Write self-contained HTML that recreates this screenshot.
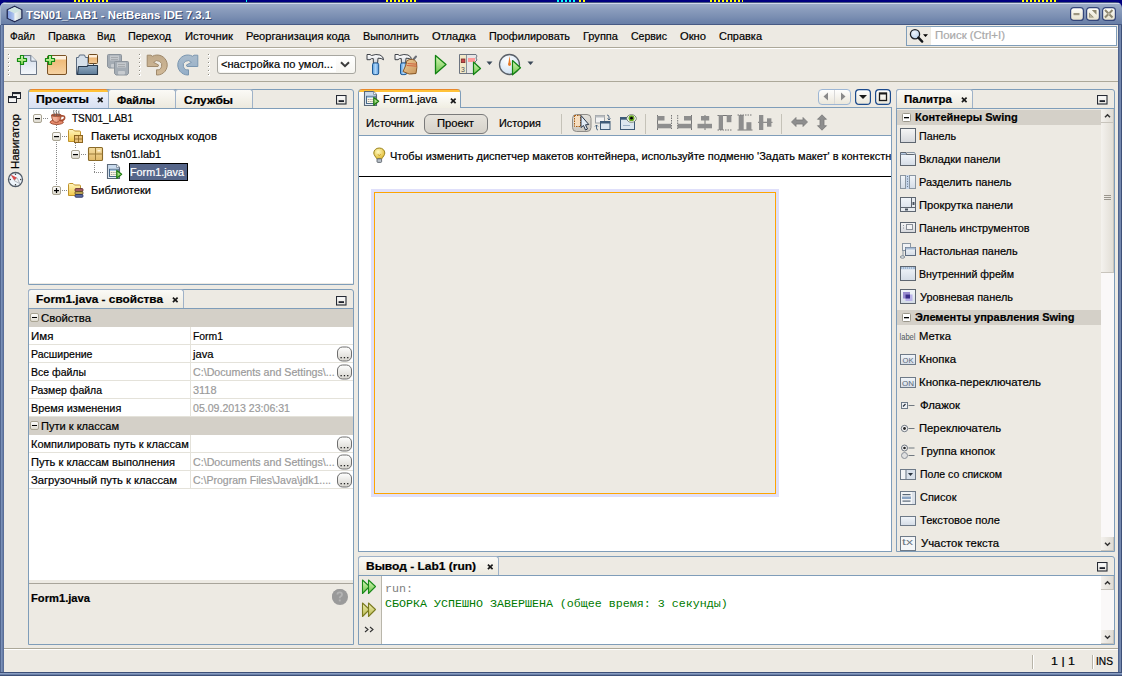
<!DOCTYPE html><html><head><meta charset="utf-8"><style>
html,body{margin:0;padding:0}
body{width:1122px;height:676px;position:relative;overflow:hidden;background:#000080;font-family:"Liberation Sans",sans-serif;font-size:11px;color:#000}
body>div,body>span,body>svg{position:absolute}
.t,.tt,.m{position:absolute;white-space:nowrap;line-height:13px;transform-origin:0 0}
.t{-webkit-text-stroke:0.2px}
</style></head><body>

<div style="left:0px;top:0px;width:1122px;height:3px;background:#000080"></div>
<div style="left:74px;top:0px;width:34px;height:2px;background:repeating-linear-gradient(90deg,#FFFF00 0,#FFFF00 2px,transparent 2px,transparent 4px)"></div>
<div style="left:386px;top:0px;width:32px;height:2px;background:repeating-linear-gradient(90deg,#FFFF00 0,#FFFF00 2px,transparent 2px,transparent 4px)"></div>
<div style="left:557px;top:0px;width:20px;height:2px;background:repeating-linear-gradient(90deg,#00FFFF 0,#00FFFF 2px,transparent 2px,transparent 4px)"></div>
<div style="left:579px;top:0px;width:8px;height:2px;background:repeating-linear-gradient(90deg,#FFFF00 0,#FFFF00 2px,transparent 2px,transparent 4px)"></div>
<div style="left:710px;top:0px;width:33px;height:2px;background:repeating-linear-gradient(90deg,#FFFF00 0,#FFFF00 2px,transparent 2px,transparent 4px)"></div>
<div style="left:1022px;top:0px;width:34px;height:2px;background:repeating-linear-gradient(90deg,#FFFF00 0,#FFFF00 2px,transparent 2px,transparent 4px)"></div>
<div style="left:246px;top:0px;width:1px;height:2px;background:repeating-linear-gradient(90deg,#00FFFF 0,#00FFFF 2px,transparent 2px,transparent 4px)"></div>
<div style="left:0;top:2px;width:1122px;height:674px;border-radius:6px 6px 0 0;box-shadow:inset 1px 0 0 #A8B8D0;background:linear-gradient(#4A5A80 0px,#4A5A80 1px,#D2DAEA 1px,#D2DAEA 2px,#9CACC8 2px,#8A9CBC 8px,#7A8EB2 15px,#6A80A8 21px,#6A80A8 22px,#475A84 22px,#475A84 23px,#5F739C 23px)"></div>
<div style="left:0px;top:25px;width:4px;height:651px;background:linear-gradient(90deg,#52668F 0,#52668F 1px,#7A90B8 1px,#7A90B8 2px,#6A80A8 2px,#6A80A8 3px,#5A6E98 3px)"></div>
<div style="left:1118px;top:25px;width:4px;height:651px;background:linear-gradient(90deg,#50648E 0,#50648E 1px,#6A80A8 1px,#6A80A8 2px,#7488AE 2px,#7488AE 3px,#3E5078 3px)"></div>
<div style="left:0px;top:672px;width:1122px;height:4px;background:linear-gradient(#3E5078 0,#3E5078 1px,#8A9EC2 1px,#8A9EC2 2px,#6A80A8 2px,#6A80A8 3px,#3E5078 3px)"></div>
<div style="left:4px;top:25px;width:1114px;height:647px;background:#EDEAE3"></div>
<span class="tt" style="left:26px;top:9px;color:#fff;font-weight:bold;font-size:11px;text-shadow:1px 1px 0 #3A4A70;transform:scaleX(1.0363);">TSN01_LAB1 - NetBeans IDE 7.3.1</span>
<span class="t" style="left:10px;top:30px;;transform:scaleX(0.9243);">Файл</span>
<span class="t" style="left:48px;top:30px;;transform:scaleX(0.9954);">Правка</span>
<span class="t" style="left:97px;top:30px;;transform:scaleX(0.9042);">Вид</span>
<span class="t" style="left:128px;top:30px;;transform:scaleX(0.9839);">Переход</span>
<span class="t" style="left:185px;top:30px;;transform:scaleX(1.0220);">Источник</span>
<span class="t" style="left:246px;top:30px;;transform:scaleX(1.0070);">Реорганизация кода</span>
<span class="t" style="left:363px;top:30px;;transform:scaleX(0.9914);">Выполнить</span>
<span class="t" style="left:432px;top:30px;;transform:scaleX(1.0119);">Отладка</span>
<span class="t" style="left:489px;top:30px;;transform:scaleX(0.9818);">Профилировать</span>
<span class="t" style="left:583px;top:30px;;transform:scaleX(1.0036);">Группа</span>
<span class="t" style="left:631px;top:30px;;transform:scaleX(0.9556);">Сервис</span>
<span class="t" style="left:680px;top:30px;;transform:scaleX(1.0171);">Окно</span>
<span class="t" style="left:719px;top:30px;;transform:scaleX(0.9964);">Справка</span>
<div style="left:4px;top:47px;width:1114px;height:1px;background:#ACA899"></div>
<div style="left:4px;top:48px;width:1114px;height:1px;background:#fff"></div>
<div style="left:4px;top:81px;width:1114px;height:1px;background:#ACA899"></div>
<div style="left:28px;top:89px;width:324px;height:194px;border:1px solid #7F9DB9;border-radius:3px 3px 0 0;background:#EDEAE3"></div>
<div style="left:29px;top:109px;width:324px;height:174px;background:#fff"></div>
<div style="left:29px;top:108px;width:324px;height:1px;background:#7F9DB9"></div>
<div style="left:28px;top:89px;width:81px;height:19px;border-radius:4px 4px 0 0;background:linear-gradient(#E8882A 0,#E8882A 1px,#FFC23A 1px,#FFC23A 3px,#EEF2FB 3px,#D8E0F2 100%);box-sizing:border-box;border-left:1px solid #7F9DB9;border-right:1px solid #7F9DB9"></div>
<div style="left:108px;top:89px;width:68px;height:19px;border-radius:3px 3px 0 0;background:linear-gradient(#FBFAF6,#ECE9DE);border:1px solid #9FB2C8;border-bottom:none;box-sizing:border-box"></div>
<div style="left:175px;top:89px;width:78px;height:19px;border-radius:3px 3px 0 0;background:linear-gradient(#FBFAF6,#ECE9DE);border:1px solid #9FB2C8;border-bottom:none;box-sizing:border-box"></div>
<span class="t" style="left:36px;top:93px;font-weight:bold;transform:scaleX(1.1099);">Проекты</span>
<svg style="left:97px;top:97px" width="7" height="6" viewBox="0 0 7 6"><path d='M0.9 0.7 L5.6 5.1 M5.6 0.7 L0.9 5.1' stroke='#1A1A1A' stroke-width='1.7'/></svg>
<span class="t" style="left:117px;top:94px;font-weight:bold;transform:scaleX(0.9830);">Файлы</span>
<span class="t" style="left:184px;top:94px;font-weight:bold;transform:scaleX(1.0881);">Службы</span>
<span class="t" style="left:72px;top:112px;;transform:scaleX(0.9069);">TSN01_LAB1</span>
<span class="t" style="left:91px;top:130px;;transform:scaleX(1.0348);">Пакеты исходных кодов</span>
<span class="t" style="left:111px;top:148px;;transform:scaleX(0.9849);">tsn01.lab1</span>
<div style="left:129px;top:163px;width:59px;height:18px;background:#56668A;border:1px solid #000;box-sizing:border-box"></div>
<span class="t" style="left:130px;top:166px;color:#fff;transform:scaleX(0.9813);">Form1.java</span>
<span class="t" style="left:91px;top:184px;;transform:scaleX(1.0066);">Библиотеки</span>
<div style="left:28px;top:289px;width:324px;height:354px;border:1px solid #7F9DB9;border-radius:3px 3px 0 0;background:#EDEAE3"></div>
<div style="left:29px;top:308px;width:324px;height:1px;background:#7F9DB9"></div>
<div style="left:29px;top:309px;width:324px;height:271px;background:#fff"></div>
<div style="left:28px;top:289px;width:156px;height:19px;border-radius:3px 3px 0 0;background:linear-gradient(#FBFAF6,#ECE9DE);border:1px solid #9FB2C8;border-bottom:none;box-sizing:border-box"></div>
<span class="t" style="left:36px;top:293px;font-weight:bold;transform:scaleX(1.0733);">Form1.java - свойства</span>
<svg style="left:172px;top:297px" width="7" height="6" viewBox="0 0 7 6"><path d='M0.9 0.7 L5.6 5.1 M5.6 0.7 L0.9 5.1' stroke='#1A1A1A' stroke-width='1.7'/></svg>
<div style="left:29px;top:309px;width:324px;height:18px;background:#D4D0C8"></div>
<svg style="left:30px;top:313px" width="9" height="9" viewBox="0 0 9 9"><defs><linearGradient id='sx' x1='0' y1='0' x2='0' y2='1'><stop offset='0' stop-color='#FFFFFF'/><stop offset='1' stop-color='#DCD8CC'/></linearGradient></defs><rect x='0.5' y='0.5' width='8' height='8' rx='1.5' fill='url(#sx)' stroke='#A9A493' stroke-width='1'/><rect x='2' y='4' width='5' height='1' fill='#000'/></svg>
<span class="t" style="left:41px;top:312px;;transform:scaleX(1.0349);">Свойства</span>
<div style="left:29px;top:344px;width:324px;height:1px;background:#E4E2DA"></div>
<div style="left:190px;top:327px;width:1px;height:18px;background:#E4E2DA"></div>
<span class="t" style="left:31px;top:330px;;transform:scaleX(1.0449);">Имя</span>
<span class="t" style="left:193px;top:330px;;transform:scaleX(0.9440);">Form1</span>
<div style="left:29px;top:362px;width:324px;height:1px;background:#E4E2DA"></div>
<div style="left:190px;top:345px;width:1px;height:18px;background:#E4E2DA"></div>
<span class="t" style="left:31px;top:348px;;transform:scaleX(0.9588);">Расширение</span>
<span class="t" style="left:193px;top:348px;;transform:scaleX(1.0155);">java</span>
<svg style="left:336px;top:346px" width="17" height="16" viewBox="0 0 17 16"><defs><linearGradient id='bt' x1='0' y1='0' x2='0' y2='1'><stop offset='0' stop-color='#FFFFFF'/><stop offset='1' stop-color='#D6D4CE'/></linearGradient></defs><rect x='1.5' y='1' width='14' height='14' rx='5' fill='url(#bt)' stroke='#6E6E6E' stroke-width='1'/><rect x='4.5' y='11' width='1.3' height='1.3' fill='#222'/><rect x='7.8' y='11' width='1.3' height='1.3' fill='#222'/><rect x='11.1' y='11' width='1.3' height='1.3' fill='#222'/></svg>
<div style="left:29px;top:380px;width:324px;height:1px;background:#E4E2DA"></div>
<div style="left:190px;top:363px;width:1px;height:18px;background:#E4E2DA"></div>
<span class="t" style="left:31px;top:366px;;transform:scaleX(0.9539);">Все файлы</span>
<span class="t" style="left:193px;top:366px;color:#9A9A9A;transform:scaleX(0.9696);">C:\Documents and Settings\...</span>
<svg style="left:336px;top:364px" width="17" height="16" viewBox="0 0 17 16"><defs><linearGradient id='bt' x1='0' y1='0' x2='0' y2='1'><stop offset='0' stop-color='#FFFFFF'/><stop offset='1' stop-color='#D6D4CE'/></linearGradient></defs><rect x='1.5' y='1' width='14' height='14' rx='5' fill='url(#bt)' stroke='#6E6E6E' stroke-width='1'/><rect x='4.5' y='11' width='1.3' height='1.3' fill='#222'/><rect x='7.8' y='11' width='1.3' height='1.3' fill='#222'/><rect x='11.1' y='11' width='1.3' height='1.3' fill='#222'/></svg>
<div style="left:29px;top:398px;width:324px;height:1px;background:#E4E2DA"></div>
<div style="left:190px;top:381px;width:1px;height:18px;background:#E4E2DA"></div>
<span class="t" style="left:31px;top:384px;;transform:scaleX(0.9502);">Размер файла</span>
<span class="t" style="left:193px;top:384px;color:#9A9A9A;transform:scaleX(0.9934);">3118</span>
<div style="left:29px;top:416px;width:324px;height:1px;background:#E4E2DA"></div>
<div style="left:190px;top:399px;width:1px;height:18px;background:#E4E2DA"></div>
<span class="t" style="left:31px;top:402px;;transform:scaleX(0.9881);">Время изменения</span>
<span class="t" style="left:193px;top:402px;color:#9A9A9A;transform:scaleX(0.9610);">05.09.2013 23:06:31</span>
<div style="left:29px;top:417px;width:324px;height:18px;background:#D4D0C8"></div>
<svg style="left:30px;top:421px" width="9" height="9" viewBox="0 0 9 9"><defs><linearGradient id='sx' x1='0' y1='0' x2='0' y2='1'><stop offset='0' stop-color='#FFFFFF'/><stop offset='1' stop-color='#DCD8CC'/></linearGradient></defs><rect x='0.5' y='0.5' width='8' height='8' rx='1.5' fill='url(#sx)' stroke='#A9A493' stroke-width='1'/><rect x='2' y='4' width='5' height='1' fill='#000'/></svg>
<span class="t" style="left:41px;top:420px;;transform:scaleX(1.0042);">Пути к классам</span>
<div style="left:29px;top:452px;width:324px;height:1px;background:#E4E2DA"></div>
<div style="left:190px;top:435px;width:1px;height:18px;background:#E4E2DA"></div>
<div style="left:31px;top:435px;width:159px;height:18px;overflow:hidden"><span class="t" style="left:0;top:3px">Компилировать путь к классам</span></div>
<svg style="left:336px;top:436px" width="17" height="16" viewBox="0 0 17 16"><defs><linearGradient id='bt' x1='0' y1='0' x2='0' y2='1'><stop offset='0' stop-color='#FFFFFF'/><stop offset='1' stop-color='#D6D4CE'/></linearGradient></defs><rect x='1.5' y='1' width='14' height='14' rx='5' fill='url(#bt)' stroke='#6E6E6E' stroke-width='1'/><rect x='4.5' y='11' width='1.3' height='1.3' fill='#222'/><rect x='7.8' y='11' width='1.3' height='1.3' fill='#222'/><rect x='11.1' y='11' width='1.3' height='1.3' fill='#222'/></svg>
<div style="left:29px;top:470px;width:324px;height:1px;background:#E4E2DA"></div>
<div style="left:190px;top:453px;width:1px;height:18px;background:#E4E2DA"></div>
<span class="t" style="left:31px;top:456px;;transform:scaleX(1.0092);">Путь к классам выполнения</span>
<span class="t" style="left:193px;top:456px;color:#9A9A9A;transform:scaleX(0.9696);">C:\Documents and Settings\...</span>
<svg style="left:336px;top:454px" width="17" height="16" viewBox="0 0 17 16"><defs><linearGradient id='bt' x1='0' y1='0' x2='0' y2='1'><stop offset='0' stop-color='#FFFFFF'/><stop offset='1' stop-color='#D6D4CE'/></linearGradient></defs><rect x='1.5' y='1' width='14' height='14' rx='5' fill='url(#bt)' stroke='#6E6E6E' stroke-width='1'/><rect x='4.5' y='11' width='1.3' height='1.3' fill='#222'/><rect x='7.8' y='11' width='1.3' height='1.3' fill='#222'/><rect x='11.1' y='11' width='1.3' height='1.3' fill='#222'/></svg>
<div style="left:29px;top:488px;width:324px;height:1px;background:#E4E2DA"></div>
<div style="left:190px;top:471px;width:1px;height:18px;background:#E4E2DA"></div>
<span class="t" style="left:31px;top:474px;;transform:scaleX(1.0190);">Загрузочный путь к классам</span>
<span class="t" style="left:193px;top:474px;color:#9A9A9A;transform:scaleX(0.9565);">C:\Program Files\Java\jdk1....</span>
<svg style="left:336px;top:472px" width="17" height="16" viewBox="0 0 17 16"><defs><linearGradient id='bt' x1='0' y1='0' x2='0' y2='1'><stop offset='0' stop-color='#FFFFFF'/><stop offset='1' stop-color='#D6D4CE'/></linearGradient></defs><rect x='1.5' y='1' width='14' height='14' rx='5' fill='url(#bt)' stroke='#6E6E6E' stroke-width='1'/><rect x='4.5' y='11' width='1.3' height='1.3' fill='#222'/><rect x='7.8' y='11' width='1.3' height='1.3' fill='#222'/><rect x='11.1' y='11' width='1.3' height='1.3' fill='#222'/></svg>
<div style="left:29px;top:583px;width:324px;height:1px;background:#A8A49A"></div>
<span class="t" style="left:31px;top:592px;font-weight:bold;transform:scaleX(1.0156);">Form1.java</span>
<div style="left:332px;top:589px;width:16px;height:16px;border-radius:8px;background:#9C9C9C"></div>
<div style="left:358px;top:107px;width:532px;height:443px;border:1px solid #7F9DB9;background:#fff"></div>
<div style="left:359px;top:108px;width:532px;height:28px;background:#EDEAE3"></div>
<div style="left:359px;top:135px;width:532px;height:1px;background:#7F9DB9"></div>
<div style="left:358px;top:89px;width:103px;height:19px;border-radius:4px 4px 0 0;background:linear-gradient(#E8882A 0,#E8882A 1px,#FFC23A 1px,#FFC23A 3px,#FFFFFF 3px,#F0EEE2 100%);border-left:1px solid #7F9DB9;border-right:1px solid #7F9DB9;box-sizing:border-box"></div>
<span class="t" style="left:383px;top:93px;;transform:scaleX(0.9813);">Form1.java</span>
<svg style="left:450px;top:98px" width="7" height="6" viewBox="0 0 7 6"><path d='M0.9 0.7 L5.6 5.1 M5.6 0.7 L0.9 5.1' stroke='#1A1A1A' stroke-width='1.7'/></svg>
<span class="t" style="left:366px;top:117px;;transform:scaleX(1.0220);">Источник</span>
<div style="left:424px;top:114px;width:64px;height:20px;border:1px solid #7A7A7A;border-radius:6px;background:linear-gradient(#E6E3DC,#D6D2CA);box-sizing:border-box"></div>
<span class="t" style="left:437px;top:117px;;transform:scaleX(1.0211);">Проект</span>
<span class="t" style="left:499px;top:117px;;transform:scaleX(0.9843);">История</span>
<div style="left:561px;top:114px;width:1px;height:20px;background:#C5C2B8"></div>
<div style="left:645px;top:114px;width:1px;height:20px;background:#C5C2B8"></div>
<div style="left:781px;top:114px;width:1px;height:20px;background:#C5C2B8"></div>
<span class="t" style="left:390px;top:150px;width:501px;overflow:hidden;">Чтобы изменить диспетчер макетов контейнера, используйте подменю 'Задать макет' в контекстном меню</span>
<div style="left:359px;top:176px;width:532px;height:1px;background:#000"></div>
<div style="left:371px;top:189px;width:408px;height:308px;background:#DFDFFA"></div>
<div style="left:374px;top:192px;width:402px;height:302px;border:1px solid #FFA500;box-shadow:inset 0 0 0 1px #E6EAF0;background:#EDEAE3;box-sizing:border-box"></div>
<div style="left:358px;top:556px;width:755px;height:87px;border:1px solid #7F9DB9;border-radius:3px 3px 0 0;background:#EDEAE3"></div>
<div style="left:359px;top:575px;width:755px;height:1px;background:#7F9DB9"></div>
<div style="left:382px;top:576px;width:732px;height:68px;background:#fff"></div>
<div style="left:381px;top:576px;width:1px;height:68px;background:#B9B6AA"></div>
<div style="left:358px;top:556px;width:141px;height:19px;border-radius:3px 3px 0 0;background:linear-gradient(#FBFAF6,#ECE9DE);border:1px solid #9FB2C8;border-bottom:none;box-sizing:border-box"></div>
<span class="t" style="left:366px;top:560px;font-weight:bold;transform:scaleX(1.0884);">Вывод - Lab1 (run)</span>
<svg style="left:487px;top:564px" width="7" height="6" viewBox="0 0 7 6"><path d='M0.9 0.7 L5.6 5.1 M5.6 0.7 L0.9 5.1' stroke='#1A1A1A' stroke-width='1.7'/></svg>
<span class="m" style="left:385px;top:583px;font-family:'Liberation Mono',monospace;font-size:11.67px;color:#808080;">run:</span>
<span class="m" style="left:385px;top:598px;font-family:'Liberation Mono',monospace;font-size:11.67px;color:#007A00;">СБОРКА УСПЕШНО ЗАВЕРШЕНА (общее время: 3 секунды)</span>
<div style="left:896px;top:89px;width:217px;height:461px;border:1px solid #7F9DB9;border-radius:3px 3px 0 0;background:#EDEAE3"></div>
<div style="left:897px;top:108px;width:217px;height:1px;background:#7F9DB9"></div>
<div style="left:896px;top:89px;width:77px;height:19px;border-radius:3px 3px 0 0;background:linear-gradient(#FBFAF6,#ECE9DE);border:1px solid #9FB2C8;border-bottom:none;box-sizing:border-box"></div>
<span class="t" style="left:904px;top:93px;font-weight:bold;transform:scaleX(1.0435);">Палитра</span>
<svg style="left:961px;top:97px" width="7" height="6" viewBox="0 0 7 6"><path d='M0.9 0.7 L5.6 5.1 M5.6 0.7 L0.9 5.1' stroke='#1A1A1A' stroke-width='1.7'/></svg>
<div style="left:897px;top:110px;width:204px;height:15px;background:#D4D0C8"></div>
<span class="t" style="left:915px;top:111px;font-weight:bold;">Контейнеры Swing</span>
<span class="t" style="left:919px;top:130px;;transform:scaleX(0.9733);">Панель</span>
<span class="t" style="left:919px;top:153px;;transform:scaleX(0.9973);">Вкладки панели</span>
<span class="t" style="left:919px;top:176px;;transform:scaleX(1.0012);">Разделить панель</span>
<span class="t" style="left:919px;top:199px;;transform:scaleX(1.0197);">Прокрутка панели</span>
<span class="t" style="left:919px;top:222px;;transform:scaleX(0.9890);">Панель инструментов</span>
<span class="t" style="left:919px;top:245px;;transform:scaleX(0.9883);">Настольная панель</span>
<span class="t" style="left:919px;top:268px;;transform:scaleX(0.9626);">Внутренний фрейм</span>
<span class="t" style="left:920px;top:291px;;transform:scaleX(0.9928);">Уровневая панель</span>
<div style="left:897px;top:310px;width:204px;height:15px;background:#D4D0C8"></div>
<span class="t" style="left:915px;top:311px;font-weight:bold;">Элементы управления Swing</span>
<span class="t" style="left:919px;top:330px;;transform:scaleX(1.0240);">Метка</span>
<span class="t" style="left:919px;top:353px;;transform:scaleX(1.0354);">Кнопка</span>
<span class="t" style="left:919px;top:376px;;transform:scaleX(1.0383);">Кнопка-переключатель</span>
<span class="t" style="left:919.5px;top:399px;;transform:scaleX(1.0302);">Флажок</span>
<span class="t" style="left:919px;top:422px;;transform:scaleX(1.0244);">Переключатель</span>
<span class="t" style="left:921px;top:445px;;transform:scaleX(1.0305);">Группа кнопок</span>
<span class="t" style="left:919.5px;top:468px;;transform:scaleX(0.9547);">Поле со списком</span>
<span class="t" style="left:919.5px;top:491px;;transform:scaleX(0.9970);">Список</span>
<span class="t" style="left:919.5px;top:514px;;transform:scaleX(1.0117);">Текстовое поле</span>
<span class="t" style="left:921px;top:537px;;transform:scaleX(1.0297);">Участок текста</span>
<div style="left:1101px;top:109px;width:13px;height:442px;background:#FAF8F8"></div>
<div style="left:1101px;top:109px;width:13px;height:1px;background:#fff"></div>
<div style="left:906px;top:26px;width:211px;height:20px;border:1px solid #7F9DB9;background:#fff;box-sizing:border-box"></div>
<div style="left:907px;top:27px;width:24px;height:18px;background:#EDEAE3"></div>
<span class="t" style="left:935px;top:29px;color:#A9A9A9;transform:scaleX(1.0378);">Поиск (Ctrl+I)</span>
<div style="left:4px;top:648px;width:1114px;height:1px;background:#ACA899"></div>
<div style="left:4px;top:649px;width:1114px;height:1px;background:#fff"></div>
<span class="t" style="left:1051px;top:655px;;transform:scaleX(1.1311);">1 | 1</span>
<span class="t" style="left:1096px;top:655px;;transform:scaleX(0.9267);">INS</span>
<svg style="left:6px;top:5px" width="17" height="18" viewBox="0 0 17 18"><defs><linearGradient id='cl' x1='0' x2='1'><stop offset='0' stop-color='#7F9BE0'/><stop offset='1' stop-color='#B8CCF0'/></linearGradient><linearGradient id='cr' x1='0' x2='1'><stop offset='0' stop-color='#F4F8F8'/><stop offset='1' stop-color='#C8D4D4'/></linearGradient></defs>
<path d='M8.6 1.3 L15.8 4.8 L15.8 13.2 L8.6 16.7 L1.3 13.2 L1.3 4.8 Z' fill='#D6E4E4' stroke='#1E2650' stroke-width='1.4' stroke-linejoin='round'/>
<path d='M1.9 5.2 L8.6 8.2 L8.6 16 L1.9 12.9 Z' fill='url(#cl)'/><path d='M8.6 8.2 L15.2 5.2 L15.2 12.9 L8.6 16 Z' fill='url(#cr)'/><path d='M2 4.9 L8.6 2 L15.2 4.9 L8.6 8 Z' fill='#CFE4E2'/></svg>
<svg style="left:1070px;top:7px" width="14" height="14" viewBox="0 0 14 14"><defs><linearGradient id='wb1070' x1='0' y1='0' x2='0' y2='1'><stop offset='0' stop-color='#FFFFFB'/><stop offset='1' stop-color='#E6E1CC'/></linearGradient></defs>
<rect x='0.6' y='0.6' width='12.8' height='12.8' rx='3' fill='url(#wb1070)' stroke='#34467A' stroke-width='1.2'/><rect x='3.5' y='6' width='6' height='2.2' fill='#9D9781'/></svg>
<svg style="left:1086px;top:7px" width="14" height="14" viewBox="0 0 14 14"><defs><linearGradient id='wb1086' x1='0' y1='0' x2='0' y2='1'><stop offset='0' stop-color='#FFFFFB'/><stop offset='1' stop-color='#E6E1CC'/></linearGradient></defs>
<rect x='0.6' y='0.6' width='12.8' height='12.8' rx='3' fill='url(#wb1086)' stroke='#34467A' stroke-width='1.2'/><path d='M3 10.5 L3 5.5 L8 10.5 Z M10.5 3 L5.8 3 L10.5 7.7 Z' fill='#8E8870'/><path d='M3.5 10 L3.5 7 L6.5 10 Z' fill='#B8B2A0'/></svg>
<svg style="left:1102px;top:7px" width="14" height="14" viewBox="0 0 14 14"><defs><linearGradient id='wb1102' x1='0' y1='0' x2='0' y2='1'><stop offset='0' stop-color='#FFFFFB'/><stop offset='1' stop-color='#E6E1CC'/></linearGradient></defs>
<rect x='0.6' y='0.6' width='12.8' height='12.8' rx='3' fill='url(#wb1102)' stroke='#34467A' stroke-width='1.2'/><path d='M3 3 L10.5 10.5 M10.5 3 L3 10.5' stroke='#8E8870' stroke-width='2'/><circle cx='6.8' cy='6.8' r='1.2' fill='#B8B2A0'/></svg>
<svg style="left:8px;top:54px" width="2" height="24" viewBox="0 0 2 24"><rect x='0' y='0' width='2' height='2' fill='#fff'/><rect x='0' y='0' width='1' height='1' fill='#8E8B80'/><rect x='0' y='4' width='2' height='2' fill='#fff'/><rect x='0' y='4' width='1' height='1' fill='#8E8B80'/><rect x='0' y='8' width='2' height='2' fill='#fff'/><rect x='0' y='8' width='1' height='1' fill='#8E8B80'/><rect x='0' y='12' width='2' height='2' fill='#fff'/><rect x='0' y='12' width='1' height='1' fill='#8E8B80'/><rect x='0' y='16' width='2' height='2' fill='#fff'/><rect x='0' y='16' width='1' height='1' fill='#8E8B80'/><rect x='0' y='20' width='2' height='2' fill='#fff'/><rect x='0' y='20' width='1' height='1' fill='#8E8B80'/></svg>
<svg style="left:139px;top:54px" width="2" height="24" viewBox="0 0 2 24"><rect x='0' y='0' width='2' height='2' fill='#fff'/><rect x='0' y='0' width='1' height='1' fill='#8E8B80'/><rect x='0' y='4' width='2' height='2' fill='#fff'/><rect x='0' y='4' width='1' height='1' fill='#8E8B80'/><rect x='0' y='8' width='2' height='2' fill='#fff'/><rect x='0' y='8' width='1' height='1' fill='#8E8B80'/><rect x='0' y='12' width='2' height='2' fill='#fff'/><rect x='0' y='12' width='1' height='1' fill='#8E8B80'/><rect x='0' y='16' width='2' height='2' fill='#fff'/><rect x='0' y='16' width='1' height='1' fill='#8E8B80'/><rect x='0' y='20' width='2' height='2' fill='#fff'/><rect x='0' y='20' width='1' height='1' fill='#8E8B80'/></svg>
<svg style="left:208px;top:54px" width="2" height="24" viewBox="0 0 2 24"><rect x='0' y='0' width='2' height='2' fill='#fff'/><rect x='0' y='0' width='1' height='1' fill='#8E8B80'/><rect x='0' y='4' width='2' height='2' fill='#fff'/><rect x='0' y='4' width='1' height='1' fill='#8E8B80'/><rect x='0' y='8' width='2' height='2' fill='#fff'/><rect x='0' y='8' width='1' height='1' fill='#8E8B80'/><rect x='0' y='12' width='2' height='2' fill='#fff'/><rect x='0' y='12' width='1' height='1' fill='#8E8B80'/><rect x='0' y='16' width='2' height='2' fill='#fff'/><rect x='0' y='16' width='1' height='1' fill='#8E8B80'/><rect x='0' y='20' width='2' height='2' fill='#fff'/><rect x='0' y='20' width='1' height='1' fill='#8E8B80'/></svg>
<svg style="left:16px;top:54px" width="22" height="22" viewBox="0 0 22 22"><defs><linearGradient id='gp' x1='0' y1='0' x2='0' y2='1'><stop offset='0' stop-color='#E6FFC8'/><stop offset='1' stop-color='#7CD24A'/></linearGradient><linearGradient id='pg' x1='0' y1='0' x2='0' y2='1'><stop offset='0' stop-color='#D2DCEA'/><stop offset='1' stop-color='#F4F7FB'/></linearGradient></defs>
<path d='M4.5 1.5 H14.8 L20.5 7.2 V20.5 H4.5 Z' fill='url(#pg)' stroke='#6A7686' stroke-width='1'/><path d='M14.8 1.5 V7.2 H20.5' fill='#E8EEF6' stroke='#6A7686' stroke-width='1'/><path d='M4.5 1.5 h3 v3 h3 v3 h-3 v3 h-3 v-3 h-3 v-3 h3 Z' fill='url(#gp)' stroke='#138A13' stroke-width='1.2' stroke-linejoin='round'/></svg>
<svg style="left:44px;top:54px" width="24" height="22" viewBox="0 0 24 22"><defs><linearGradient id='ob' x1='0' y1='0' x2='0' y2='1'><stop offset='0' stop-color='#ECB46C'/><stop offset='1' stop-color='#F6D2A2'/></linearGradient></defs>
<rect x='3.5' y='1.5' width='19' height='19' rx='1.5' fill='url(#ob)' stroke='#7A5226' stroke-width='1'/><rect x='4' y='2' width='18' height='3.5' fill='#FCF0E0'/><path d='M4.5 1.5 h3 v3 h3 v3 h-3 v3 h-3 v-3 h-3 v-3 h3 Z' fill='url(#gp)' stroke='#138A13' stroke-width='1.2' stroke-linejoin='round'/></svg>
<svg style="left:75px;top:53px" width="24" height="23" viewBox="0 0 24 23"><defs><linearGradient id='fd' x1='0' y1='0' x2='0' y2='1'><stop offset='0' stop-color='#90AAC2'/><stop offset='1' stop-color='#5E7C98'/></linearGradient><linearGradient id='ob2' x1='0' y1='0' x2='0' y2='1'><stop offset='0' stop-color='#E8A860'/><stop offset='1' stop-color='#F4CC98'/></linearGradient></defs>
<path d='M1.5 21.5 V4.5 H3.5 L4.5 2 H9.5 L10.5 4.5 H13 V21.5 Z' fill='#D6E0EA' stroke='#5C6C80' stroke-width='1'/>
<rect x='13.5' y='1.5' width='9' height='9' rx='1' fill='url(#ob2)' stroke='#6E4A1E' stroke-width='1'/><rect x='14' y='2' width='8' height='2.5' fill='#FCEEDC'/><rect x='18' y='10.5' width='1' height='3' fill='#4A5A6A'/>
<path d='M2.5 21.5 L3.5 13.5 H12 L13 12.5 H22.5 V21.5 Z' fill='url(#fd)' stroke='#26384C' stroke-width='1.1' stroke-linejoin='round'/></svg>
<svg style="left:106px;top:53px" width="24" height="23" viewBox="0 0 24 23"><path d='M1.5 2.5 q0 -1 1 -1 h12 q1 0 1 1 v11 l-1.5 1.5 h-11 l-1.5 -1.5 Z' fill='#A4ACB4' stroke='#8C949C' stroke-width='1'/><rect x='4' y='2.5' width='9' height='5' fill='#C4C8CC'/><rect x='5' y='4' width='7' height='0.8' fill='#A0A4A8'/><rect x='5' y='6' width='7' height='0.8' fill='#A0A4A8'/><rect x='5' y='11' width='7' height='3.5' rx='1' fill='#C8CCD0'/><path d='M8.5 9.5 q0 -1 1 -1 h12 q1 0 1 1 v11 l-1.5 1.5 h-11 l-1.5 -1.5 Z' fill='#A4ACB4' stroke='#8C949C' stroke-width='1'/><rect x='11' y='9.5' width='9' height='5' fill='#C4C8CC'/><rect x='12' y='11' width='7' height='0.8' fill='#A0A4A8'/><rect x='12' y='13' width='7' height='0.8' fill='#A0A4A8'/><rect x='12' y='18' width='7' height='3.5' rx='1' fill='#C8CCD0'/></svg>
<svg style="left:144px;top:52px" width="26" height="25" viewBox="0 0 26 25"><defs><linearGradient id='ug' x1='0' y1='0' x2='0' y2='1'><stop offset='0' stop-color='#C0AA8A'/><stop offset='1' stop-color='#D2BA98'/></linearGradient></defs><g fill='url(#ug)' stroke='#A08A6C'><path d='M8.3 4.3 A10 10 0 1 1 13 23 L12.5 23 L12.5 17.8 A4.6 4.6 0 1 0 9.6 10.4 L14.6 13 L14 14.5 L3.2 14.5 L3.2 3.2 L7 3.2 Z' stroke-linejoin='round' stroke-width='1'/></g></svg>
<svg style="left:175px;top:52px" width="26" height="25" viewBox="0 0 26 25"><defs><linearGradient id='rg' x1='0' y1='0' x2='0' y2='1'><stop offset='0' stop-color='#AABCCC'/><stop offset='1' stop-color='#94AEC8'/></linearGradient></defs><g transform='translate(26,0) scale(-1,1)' fill='url(#rg)' stroke='#7A96B0'><path d='M8.3 4.3 A10 10 0 1 1 13 23 L12.5 23 L12.5 17.8 A4.6 4.6 0 1 0 9.6 10.4 L14.6 13 L14 14.5 L3.2 14.5 L3.2 3.2 L7 3.2 Z' stroke-linejoin='round' stroke-width='1'/></g></svg>
<div style="left:217px;top:55px;width:139px;height:19px;border:1px solid #A7A6A0;border-radius:3px;background:linear-gradient(#FFFFFF,#F6F5F0);box-sizing:border-box"></div>
<div style="left:220px;top:57px;width:116px;height:15px;background:#fff"></div>
<svg style="left:340px;top:61px" width="10" height="7" viewBox="0 0 10 7"><path d='M1 1.2 L5 5.2 L9 1.2' fill='none' stroke='#3C3C3C' stroke-width='2'/></svg>
<svg style="left:364px;top:52px" width="24" height="25" viewBox="0 0 24 25"><defs><linearGradient id='hm' x1='0' y1='0' x2='0' y2='1'><stop offset='0' stop-color='#FFFFFF'/><stop offset='1' stop-color='#D0D4DA'/></linearGradient><linearGradient id='hd' x1='0' y1='0' x2='1' y2='0'><stop offset='0' stop-color='#5A9CDC'/><stop offset='0.5' stop-color='#B0D8FA'/><stop offset='1' stop-color='#5494D8'/></linearGradient></defs><path d='M3 2.5 L6 2.5 L7.5 3.5 Q12 1.8 16 3 Q19.5 4.5 19.6 7.8 Q17.5 6 14 6.2 L13.6 11.2 L9.4 11.2 L9.3 6.6 L7.5 6.6 L6 7.7 L3 7.7 Z' fill='url(#hm)' stroke='#3E4248' stroke-width='1' stroke-linejoin='round'/><rect x='8.5' y='11' width='6.2' height='11.6' rx='1.6' fill='url(#hd)' stroke='#1E5A96' stroke-width='1'/></svg>
<svg style="left:392px;top:52px" width="28" height="25" viewBox="0 0 28 25"><defs><linearGradient id='hm' x1='0' y1='0' x2='0' y2='1'><stop offset='0' stop-color='#FFFFFF'/><stop offset='1' stop-color='#D0D4DA'/></linearGradient><linearGradient id='hd' x1='0' y1='0' x2='1' y2='0'><stop offset='0' stop-color='#5A9CDC'/><stop offset='0.5' stop-color='#B0D8FA'/><stop offset='1' stop-color='#5494D8'/></linearGradient><linearGradient id='br' x1='0' y1='0' x2='1' y2='1'><stop offset='0' stop-color='#F0D09A'/><stop offset='1' stop-color='#C8945A'/></linearGradient></defs><path d='M3 2.5 L6 2.5 L7.5 3.5 Q12 1.8 16 3 Q19.5 4.5 19.6 7.8 Q17.5 6 14 6.2 L13.6 11.2 L9.4 11.2 L9.3 6.6 L7.5 6.6 L6 7.7 L3 7.7 Z' fill='url(#hm)' stroke='#3E4248' stroke-width='1' stroke-linejoin='round'/><rect x='8.5' y='11' width='6.2' height='11.6' rx='1.6' fill='url(#hd)' stroke='#1E5A96' stroke-width='1'/><path d='M21 8 L24 4.5' stroke='#6A6E76' stroke-width='2' stroke-linecap='round'/><path d='M15 8.5 Q21 5.5 24.5 10 Q25.5 15 24 21.5 Q17 23.5 11 19.5 Q14 14 15 8.5 Z' fill='url(#br)' stroke='#8A5A28' stroke-width='1' stroke-linejoin='round'/><path d='M15.5 11.5 L24.8 12.2 M14.8 13.5 L24.8 14.2' stroke='#D05A3A' stroke-width='0.9'/></svg>
<svg style="left:434px;top:54px" width="14" height="22" viewBox="0 0 14 22"><defs><linearGradient id='gt' x1='0' y1='0' x2='0' y2='1'><stop offset='0' stop-color='#D8F8B8'/><stop offset='1' stop-color='#6CC24A'/></linearGradient></defs><path d='M1.5 1.5 L12 10.5 L1.5 19.8 Z' fill='url(#gt)' stroke='#128212' stroke-width='1.3' stroke-linejoin='round'/></svg>
<svg style="left:458px;top:53px" width="25" height="23" viewBox="0 0 25 23"><defs><linearGradient id='gt2' x1='0' y1='0' x2='0' y2='1'><stop offset='0' stop-color='#D8F8B8'/><stop offset='1' stop-color='#6CC24A'/></linearGradient></defs><path d='M1.5 1.5 H18 L19 3 L18 5 L19 7 L17 9 V19 L15 20.5 H1.5 Z' fill='#E6E6E6' stroke='#6C7480' stroke-width='1'/><rect x='2' y='2' width='6' height='18' fill='#F2E8C8'/><rect x='8' y='2' width='1' height='18' fill='#8A9098'/><rect x='3.3' y='6' width='3.6' height='3.6' fill='#C84848' stroke='#7A2828' stroke-width='0.8'/><text x='3' y='18.5' font-size='7' font-family='Liberation Sans' fill='#4A5058'>3</text><rect x='10' y='5' width='7' height='4' fill='#FF9A9A'/><path d='M15.5 9 L22.5 15.5 L15.5 21.5 Z' fill='url(#gt2)' stroke='#128212' stroke-width='1.2' stroke-linejoin='round'/></svg>
<svg style="left:486px;top:61px" width="7" height="5" viewBox="0 0 7 5"><path d='M0.5 0.5 H6.5 L3.5 4 Z' fill='#3A4858'/></svg>
<svg style="left:498px;top:53px" width="24" height="23" viewBox="0 0 24 23"><defs><linearGradient id='gt3' x1='0' y1='0' x2='0' y2='1'><stop offset='0' stop-color='#D8F8B8'/><stop offset='1' stop-color='#6CC24A'/></linearGradient><radialGradient id='ck' cx='0.4' cy='0.3' r='0.8'><stop offset='0' stop-color='#FFFFFF'/><stop offset='1' stop-color='#C8DCF0'/></radialGradient></defs><circle cx='11.5' cy='11.5' r='10' fill='url(#ck)' stroke='#5A6068' stroke-width='1.3'/><path d='M11.5 3 L12.8 11.5 L10.2 11.5 Z' fill='#E87A28'/><circle cx='11.5' cy='11.5' r='1.4' fill='#E87A28'/><path d='M14.5 7.5 L22.5 14.8 L14.5 21.8 Z' fill='url(#gt3)' stroke='#128212' stroke-width='1.2' stroke-linejoin='round'/></svg>
<svg style="left:527px;top:61px" width="7" height="5" viewBox="0 0 7 5"><path d='M0.5 0.5 H6.5 L3.5 4 Z' fill='#3A4858'/></svg>
<span class="t" style="left:221px;top:58px;;transform:scaleX(1.0063);">&lt;настройка по умол...</span>
<svg style="left:8px;top:92px" width="14" height="12" viewBox="0 0 14 12"><rect x='4.5' y='0.5' width='8' height='6' fill='#F4F4F4' stroke='#22262E' stroke-width='1'/><rect x='4.5' y='0.5' width='8' height='1.6' fill='#22262E'/><rect x='0.5' y='4.5' width='8' height='6' fill='#F4F4F4' stroke='#22262E' stroke-width='1'/><rect x='0.5' y='4.5' width='8' height='1.6' fill='#22262E'/></svg>
<span class="t" style="left:9px;top:169px;transform:rotate(-90deg) scaleX(1.04)">Навигатор</span>
<svg style="left:7px;top:171px" width="17" height="17" viewBox="0 0 17 17"><circle cx='8.5' cy='8.5' r='7' fill='#EEF4FA' stroke='#505A66' stroke-width='1.3'/><circle cx='8.5' cy='3.3' r='0.7' fill='#333'/><circle cx='8.5' cy='13.7' r='0.7' fill='#333'/><circle cx='3.3' cy='8.5' r='0.7' fill='#333'/><circle cx='13.7' cy='8.5' r='0.7' fill='#333'/><path d='M3.6 3.4 L10 6.8 L7.2 9.6 Z' fill='#D84848'/><path d='M10 6.8 L12.8 12.6 L7.2 9.6 Z' fill='#F4F4F4' stroke='#8A9098' stroke-width='0.6'/></svg>
<svg style="left:33px;top:114px" width="9" height="9" viewBox="0 0 9 9"><defs><linearGradient id='ex' x1='0' y1='0' x2='0' y2='1'><stop offset='0' stop-color='#FFFFFF'/><stop offset='1' stop-color='#DCD8CC'/></linearGradient></defs><rect x='0.5' y='0.5' width='8' height='8' rx='1.5' fill='url(#ex)' stroke='#A9A493' stroke-width='1'/><rect x='2' y='4' width='5' height='1.2' fill='#000'/></svg>
<svg style="left:43px;top:118px" width="6" height="1" viewBox="0 0 6 1"><rect x='0' y='0' width='1' height='1' fill='#888'/><rect x='2' y='0' width='1' height='1' fill='#888'/><rect x='4' y='0' width='1' height='1' fill='#888'/></svg>
<svg style="left:56px;top:125px" width="1" height="6" viewBox="0 0 1 6"><rect x='0' y='0' width='1' height='1' fill='#888'/><rect x='0' y='2' width='1' height='1' fill='#888'/><rect x='0' y='4' width='1' height='1' fill='#888'/></svg>
<svg style="left:52px;top:132px" width="9" height="9" viewBox="0 0 9 9"><defs><linearGradient id='ex' x1='0' y1='0' x2='0' y2='1'><stop offset='0' stop-color='#FFFFFF'/><stop offset='1' stop-color='#DCD8CC'/></linearGradient></defs><rect x='0.5' y='0.5' width='8' height='8' rx='1.5' fill='url(#ex)' stroke='#A9A493' stroke-width='1'/><rect x='2' y='4' width='5' height='1.2' fill='#000'/></svg>
<svg style="left:62px;top:136px" width="6" height="1" viewBox="0 0 6 1"><rect x='0' y='0' width='1' height='1' fill='#888'/><rect x='2' y='0' width='1' height='1' fill='#888'/><rect x='4' y='0' width='1' height='1' fill='#888'/></svg>
<svg style="left:56px;top:142px" width="1" height="44" viewBox="0 0 1 44"><rect x='0' y='0' width='1' height='1' fill='#888'/><rect x='0' y='2' width='1' height='1' fill='#888'/><rect x='0' y='4' width='1' height='1' fill='#888'/><rect x='0' y='6' width='1' height='1' fill='#888'/><rect x='0' y='8' width='1' height='1' fill='#888'/><rect x='0' y='10' width='1' height='1' fill='#888'/><rect x='0' y='12' width='1' height='1' fill='#888'/><rect x='0' y='14' width='1' height='1' fill='#888'/><rect x='0' y='16' width='1' height='1' fill='#888'/><rect x='0' y='18' width='1' height='1' fill='#888'/><rect x='0' y='20' width='1' height='1' fill='#888'/><rect x='0' y='22' width='1' height='1' fill='#888'/><rect x='0' y='24' width='1' height='1' fill='#888'/><rect x='0' y='26' width='1' height='1' fill='#888'/><rect x='0' y='28' width='1' height='1' fill='#888'/><rect x='0' y='30' width='1' height='1' fill='#888'/><rect x='0' y='32' width='1' height='1' fill='#888'/><rect x='0' y='34' width='1' height='1' fill='#888'/><rect x='0' y='36' width='1' height='1' fill='#888'/><rect x='0' y='38' width='1' height='1' fill='#888'/><rect x='0' y='40' width='1' height='1' fill='#888'/><rect x='0' y='42' width='1' height='1' fill='#888'/></svg>
<svg style="left:75px;top:143px" width="1" height="6" viewBox="0 0 1 6"><rect x='0' y='0' width='1' height='1' fill='#888'/><rect x='0' y='2' width='1' height='1' fill='#888'/><rect x='0' y='4' width='1' height='1' fill='#888'/></svg>
<svg style="left:71px;top:150px" width="9" height="9" viewBox="0 0 9 9"><defs><linearGradient id='ex' x1='0' y1='0' x2='0' y2='1'><stop offset='0' stop-color='#FFFFFF'/><stop offset='1' stop-color='#DCD8CC'/></linearGradient></defs><rect x='0.5' y='0.5' width='8' height='8' rx='1.5' fill='url(#ex)' stroke='#A9A493' stroke-width='1'/><rect x='2' y='4' width='5' height='1.2' fill='#000'/></svg>
<svg style="left:81px;top:154px" width="6" height="1" viewBox="0 0 6 1"><rect x='0' y='0' width='1' height='1' fill='#888'/><rect x='2' y='0' width='1' height='1' fill='#888'/><rect x='4' y='0' width='1' height='1' fill='#888'/></svg>
<svg style="left:94px;top:163px" width="1" height="10" viewBox="0 0 1 10"><rect x='0' y='0' width='1' height='1' fill='#888'/><rect x='0' y='2' width='1' height='1' fill='#888'/><rect x='0' y='4' width='1' height='1' fill='#888'/><rect x='0' y='6' width='1' height='1' fill='#888'/><rect x='0' y='8' width='1' height='1' fill='#888'/></svg>
<svg style="left:94px;top:172px" width="10" height="1" viewBox="0 0 10 1"><rect x='0' y='0' width='1' height='1' fill='#888'/><rect x='2' y='0' width='1' height='1' fill='#888'/><rect x='4' y='0' width='1' height='1' fill='#888'/><rect x='6' y='0' width='1' height='1' fill='#888'/><rect x='8' y='0' width='1' height='1' fill='#888'/></svg>
<svg style="left:52px;top:186px" width="9" height="9" viewBox="0 0 9 9"><defs><linearGradient id='ex' x1='0' y1='0' x2='0' y2='1'><stop offset='0' stop-color='#FFFFFF'/><stop offset='1' stop-color='#DCD8CC'/></linearGradient></defs><rect x='0.5' y='0.5' width='8' height='8' rx='1.5' fill='url(#ex)' stroke='#A9A493' stroke-width='1'/><rect x='2' y='4' width='5' height='1.2' fill='#000'/><rect x='3.9' y='2' width='1.2' height='5' fill='#000'/></svg>
<svg style="left:62px;top:190px" width="6" height="1" viewBox="0 0 6 1"><rect x='0' y='0' width='1' height='1' fill='#888'/><rect x='2' y='0' width='1' height='1' fill='#888'/><rect x='4' y='0' width='1' height='1' fill='#888'/></svg>
<svg style="left:48px;top:108px" width="20" height="18" viewBox="0 0 20 18"><defs><linearGradient id='cup' x1='0' y1='0' x2='1' y2='0'><stop offset='0' stop-color='#F4B8A0'/><stop offset='0.5' stop-color='#F0A890'/><stop offset='1' stop-color='#C86A4C'/></linearGradient></defs><ellipse cx='8.7' cy='14.2' rx='6.6' ry='2.3' fill='#E88C6E' stroke='#9A4428' stroke-width='0.9'/><path d='M13 8 Q17.2 7.2 16.6 10.2 Q16 12.6 12.2 12.6' fill='none' stroke='#A84C30' stroke-width='1.6'/><path d='M3.6 7 Q3.8 14.2 8.4 14.4 Q12.8 14.2 13.2 7 Z' fill='url(#cup)' stroke='#9A4428' stroke-width='0.9'/><ellipse cx='8.4' cy='7.2' rx='4.8' ry='1.3' fill='#B0583C' stroke='#9A4428' stroke-width='0.6'/><path d='M6 2 Q5.2 3.5 6 5 Q6.6 6.2 6 8 M8.5 2 Q7.7 3.5 8.5 5 Q9.1 6.2 8.5 8 M11 2.5 Q10.4 4 11 5.5 Q11.4 6.5 10.8 8' fill='none' stroke='#5A5A5A' stroke-width='0.9'/></svg>
<svg style="left:67px;top:128px" width="17" height="16" viewBox="0 0 17 16"><defs><linearGradient id='fy' x1='0' y1='0' x2='0' y2='1'><stop offset='0' stop-color='#FFF6C0'/><stop offset='1' stop-color='#F2C84A'/></linearGradient></defs><path d='M1.5 13.5 V2.5 Q1.5 1.5 2.5 1.5 H6 L7.5 3 H12.5 Q13.5 3 13.5 4 V13.5 Z' fill='url(#fy)' stroke='#C0922A' stroke-width='1'/><rect x='7.5' y='7.5' width='8' height='7' fill='#E8C078' stroke='#8A6420' stroke-width='1'/><path d='M11.5 7.5 V14.5 M7.5 11 H15.5' stroke='#8A6420' stroke-width='0.8'/></svg>
<svg style="left:87px;top:146px" width="17" height="16" viewBox="0 0 17 16"><defs><linearGradient id='pk' x1='0' y1='0' x2='0' y2='1'><stop offset='0' stop-color='#F4DCA0'/><stop offset='1' stop-color='#E2BA6A'/></linearGradient></defs><rect x='1.5' y='1.5' width='14' height='13' rx='1' fill='url(#pk)' stroke='#8A6A28' stroke-width='1.1'/><path d='M8.5 1.5 V14.5 M1.5 8 H15.5' stroke='#9A7A38' stroke-width='1'/><rect x='10.5' y='4' width='3' height='1.5' fill='#FFF4D8'/></svg>
<svg style="left:106px;top:163px" width="17" height="17" viewBox="0 0 17 17"><defs><linearGradient id='fma' x1='0' y1='0' x2='0' y2='1'><stop offset='0' stop-color='#C6D8EC'/><stop offset='1' stop-color='#E6EEF6'/></linearGradient><linearGradient id='fga' x1='0' y1='0' x2='0' y2='1'><stop offset='0' stop-color='#D8F8B8'/><stop offset='1' stop-color='#6CC24A'/></linearGradient></defs><path d='M1.5 1.5 H10.5 L13.5 4.5 V15.5 H1.5 Z' fill='url(#fma)' stroke='#5A6878' stroke-width='1.1'/><path d='M10.5 1.5 V4.5 H13.5' fill='#F4F8FC' stroke='#7A8898' stroke-width='0.8'/><rect x='3.5' y='6.3' width='8.8' height='7.2' fill='#FBF6E6' stroke='#4A6A8A' stroke-width='1'/><rect x='4' y='6.8' width='7.8' height='1.2' fill='#A8C8E8'/><path d='M4.8 9.5 H10.5 M4.8 11.5 H10.5' stroke='#8A8A8A' stroke-width='0.8' stroke-dasharray='1.2 0.6'/><path d='M10.8 7.4 L15.6 11.3 L10.8 15.2 Z' fill='url(#fga)' stroke='#1E7A10' stroke-width='1.3' stroke-linejoin='round'/></svg>
<svg style="left:67px;top:182px" width="18" height="16" viewBox="0 0 18 16"><defs><linearGradient id='fy2' x1='0' y1='0' x2='0' y2='1'><stop offset='0' stop-color='#FFF6C0'/><stop offset='1' stop-color='#F2C84A'/></linearGradient></defs><path d='M1.5 13.5 V2.5 Q1.5 1.5 2.5 1.5 H6 L7.5 3 H12.5 Q13.5 3 13.5 4 V13.5 Z' fill='url(#fy2)' stroke='#C0922A' stroke-width='1'/><rect x='8' y='6.5' width='8' height='3' rx='1' fill='#A05A60' stroke='#5A2A30' stroke-width='0.8'/><rect x='8' y='9.5' width='8' height='3' rx='1' fill='#B8A050' stroke='#5A4A20' stroke-width='0.8'/><rect x='8' y='12.5' width='8' height='2.8' rx='1' fill='#5A6AA0' stroke='#2A3060' stroke-width='0.8'/></svg>
<svg style="left:336px;top:95px" width="11" height="10" viewBox="0 0 11 10"><defs><linearGradient id='mb' x1='0' y1='0' x2='0' y2='1'><stop offset='0' stop-color='#FFFFFF'/><stop offset='1' stop-color='#E4E2DC'/></linearGradient></defs><rect x='0.5' y='0.5' width='9.5' height='8.5' fill='url(#mb)' stroke='#262A34' stroke-width='1.1'/><rect x='2.6' y='5.2' width='5.4' height='1.8' fill='#1E222C'/></svg>
<svg style="left:336px;top:296px" width="11" height="10" viewBox="0 0 11 10"><defs><linearGradient id='mb' x1='0' y1='0' x2='0' y2='1'><stop offset='0' stop-color='#FFFFFF'/><stop offset='1' stop-color='#E4E2DC'/></linearGradient></defs><rect x='0.5' y='0.5' width='9.5' height='8.5' fill='url(#mb)' stroke='#262A34' stroke-width='1.1'/><rect x='2.6' y='5.2' width='5.4' height='1.8' fill='#1E222C'/></svg>
<svg style="left:1097px;top:95px" width="11" height="10" viewBox="0 0 11 10"><defs><linearGradient id='mb' x1='0' y1='0' x2='0' y2='1'><stop offset='0' stop-color='#FFFFFF'/><stop offset='1' stop-color='#E4E2DC'/></linearGradient></defs><rect x='0.5' y='0.5' width='9.5' height='8.5' fill='url(#mb)' stroke='#262A34' stroke-width='1.1'/><rect x='2.6' y='5.2' width='5.4' height='1.8' fill='#1E222C'/></svg>
<svg style="left:1097px;top:562px" width="11" height="10" viewBox="0 0 11 10"><defs><linearGradient id='mb' x1='0' y1='0' x2='0' y2='1'><stop offset='0' stop-color='#FFFFFF'/><stop offset='1' stop-color='#E4E2DC'/></linearGradient></defs><rect x='0.5' y='0.5' width='9.5' height='8.5' fill='url(#mb)' stroke='#262A34' stroke-width='1.1'/><rect x='2.6' y='5.2' width='5.4' height='1.8' fill='#1E222C'/></svg>
<svg style="left:818px;top:89px" width="33" height="16" viewBox="0 0 33 16"><defs><linearGradient id='eb' x1='0' y1='0' x2='0' y2='1'><stop offset='0' stop-color='#FFFFFF'/><stop offset='1' stop-color='#EAE6DA'/></linearGradient></defs><rect x='0.5' y='0.5' width='32' height='15' rx='3.5' fill='url(#eb)' stroke='#9DB6D4' stroke-width='1'/><rect x='16' y='1' width='1' height='14' fill='#D8D8D8'/><path d='M10 3.5 V11.5 L5.5 7.5 Z' fill='#8A8A8A'/><path d='M23 3.5 V11.5 L27.5 7.5 Z' fill='#8A8A8A'/></svg>
<svg style="left:855px;top:89px" width="16" height="16" viewBox="0 0 16 16"><defs><linearGradient id='eb2' x1='0' y1='0' x2='0' y2='1'><stop offset='0' stop-color='#FFFFFF'/><stop offset='1' stop-color='#EAE6DA'/></linearGradient></defs><rect x='0.6' y='0.6' width='14.8' height='14.8' rx='3.5' fill='url(#eb2)' stroke='#1B4A8C' stroke-width='1.2'/><path d='M4 6 H12 L8 10 Z' fill='#1A1A1A'/></svg>
<svg style="left:875px;top:89px" width="16" height="16" viewBox="0 0 16 16"><defs><linearGradient id='eb3' x1='0' y1='0' x2='0' y2='1'><stop offset='0' stop-color='#FFFFFF'/><stop offset='1' stop-color='#EAE6DA'/></linearGradient></defs><rect x='0.6' y='0.6' width='14.8' height='14.8' rx='3.5' fill='url(#eb3)' stroke='#1B4A8C' stroke-width='1.2'/><rect x='4.5' y='4' width='7' height='7.5' fill='none' stroke='#1A1A1A' stroke-width='1.3'/><rect x='4.5' y='4' width='7' height='1.5' fill='#1A1A1A'/></svg>
<svg style="left:363px;top:90px" width="17" height="17" viewBox="0 0 17 17"><defs><linearGradient id='fmb' x1='0' y1='0' x2='0' y2='1'><stop offset='0' stop-color='#C6D8EC'/><stop offset='1' stop-color='#E6EEF6'/></linearGradient><linearGradient id='fgb' x1='0' y1='0' x2='0' y2='1'><stop offset='0' stop-color='#D8F8B8'/><stop offset='1' stop-color='#6CC24A'/></linearGradient></defs><path d='M1.5 1.5 H10.5 L13.5 4.5 V15.5 H1.5 Z' fill='url(#fmb)' stroke='#5A6878' stroke-width='1.1'/><path d='M10.5 1.5 V4.5 H13.5' fill='#F4F8FC' stroke='#7A8898' stroke-width='0.8'/><rect x='3.5' y='6.3' width='8.8' height='7.2' fill='#FBF6E6' stroke='#4A6A8A' stroke-width='1'/><rect x='4' y='6.8' width='7.8' height='1.2' fill='#A8C8E8'/><path d='M4.8 9.5 H10.5 M4.8 11.5 H10.5' stroke='#8A8A8A' stroke-width='0.8' stroke-dasharray='1.2 0.6'/><path d='M10.8 7.4 L15.6 11.3 L10.8 15.2 Z' fill='url(#fgb)' stroke='#1E7A10' stroke-width='1.3' stroke-linejoin='round'/></svg>
<svg style="left:372px;top:147px" width="14" height="17" viewBox="0 0 14 17"><defs><radialGradient id='bl' cx='0.4' cy='0.35' r='0.7'><stop offset='0' stop-color='#FFFAC0'/><stop offset='1' stop-color='#E0B82A'/></radialGradient></defs><path d='M7.3 1 C4 1 1.8 3.3 1.8 6 C1.8 8.2 3.6 9.6 4.8 11.8 H9.8 C11 9.6 12.8 8.2 12.8 6 C12.8 3.3 10.6 1 7.3 1 Z' fill='url(#bl)' stroke='#9A8420' stroke-width='1'/><path d='M5.8 7 L7.3 9 L8.8 7' fill='none' stroke='#C89A20' stroke-width='0.7'/><rect x='5' y='11.8' width='4.6' height='3.6' rx='0.8' fill='#B8C0C8' stroke='#4E5660' stroke-width='0.8'/></svg>
<svg style="left:572px;top:114px" width="20" height="18" viewBox="0 0 20 18"><defs><linearGradient id='sm' x1='0' y1='0' x2='0' y2='1'><stop offset='0' stop-color='#E4E2DC'/><stop offset='1' stop-color='#CCC8C0'/></linearGradient></defs><rect x='0.5' y='0.5' width='18.5' height='17' rx='4' fill='url(#sm)' stroke='#8E8C88' stroke-width='1'/><rect x='2.5' y='1.5' width='6' height='11' fill='#F6DEC0' stroke='#A85A10' stroke-width='1' stroke-dasharray='1.5 1'/><path d='M9 1.5 L9 13.5 L11.5 11.5 L13.5 16 L15.5 15 L13.5 10.8 L16.8 10.5 Z' fill='#E2ECF6' stroke='#2A3648' stroke-width='1' stroke-linejoin='round'/></svg>
<svg style="left:594px;top:114px" width="18" height="17" viewBox="0 0 18 17"><rect x='1.5' y='1.5' width='9' height='7.5' fill='#F2F2F2' stroke='#9CA0A4' stroke-width='1'/><rect x='1.5' y='1.5' width='9' height='2' fill='#B8BCC0'/><rect x='6.5' y='7.5' width='9.5' height='8' fill='#DCE6F0' stroke='#3E5A78' stroke-width='1'/><rect x='6.5' y='7.5' width='9.5' height='2' fill='#3E5A78'/><path d='M13 1 Q15 1 15 3 V6 M13.5 4.5 L15 6 L16.5 4.5' fill='none' stroke='#3E5A78' stroke-width='0.9'/><path d='M4 16 Q2.5 16 2.5 14 V11 M1 12.5 L2.5 11 L4 12.5' fill='none' stroke='#3E5A78' stroke-width='0.9'/></svg>
<svg style="left:620px;top:114px" width="18" height="17" viewBox="0 0 18 17"><rect x='0.5' y='3.5' width='14' height='12' fill='#DCE6F0' stroke='#3E5A78' stroke-width='1'/><rect x='0.5' y='3.5' width='14' height='2.2' fill='#3E5A78'/><rect x='3' y='11' width='7' height='1' fill='#9AB0C8'/><ellipse cx='11.5' cy='4.5' rx='4.8' ry='3.8' fill='#fff' stroke='#5A6A58' stroke-width='0.8'/><circle cx='11.5' cy='4.2' r='3' fill='#6AAA20'/><circle cx='11.5' cy='4.2' r='1.4' fill='#000'/></svg>
<svg style="left:652px;top:110px" width="124" height="24" viewBox="0 0 124 24"><rect x='5' y='5' width='1' height='15' fill='#777'/><rect x='5' y='6' width='7.5' height='4.5' fill='#8E8E8E'/><rect x='5' y='13.8' width='14' height='4.5' fill='#8E8E8E'/><path d='M19.5 5 V20' stroke='#777' stroke-width='1' stroke-dasharray='1.5 1'/><rect x='39' y='5' width='1' height='15' fill='#777'/><rect x='32' y='6' width='7.5' height='4.5' fill='#8E8E8E'/><rect x='25.7' y='13.8' width='14' height='4.5' fill='#8E8E8E'/><path d='M25.7 5 V20' stroke='#777' stroke-width='1' stroke-dasharray='1.5 1'/><rect x='52.5' y='5' width='1' height='15' fill='#777'/><rect x='49' y='6' width='8.2' height='4.5' fill='#8E8E8E'/><rect x='45.5' y='13.8' width='14.5' height='4.5' fill='#8E8E8E'/><rect x='65.5' y='5' width='14.5' height='1' fill='#777'/><rect x='66.7' y='5' width='4.3' height='15' fill='#8E8E8E'/><rect x='74.7' y='5' width='4.7' height='7.2' fill='#8E8E8E'/><path d='M65.5 20 H80' stroke='#777' stroke-width='1' stroke-dasharray='1.5 1'/><rect x='85.5' y='19.5' width='15' height='1' fill='#777'/><rect x='86.7' y='5' width='5' height='15' fill='#8E8E8E'/><rect x='94.4' y='12.2' width='5' height='7.8' fill='#8E8E8E'/><path d='M85.5 5 H100.5' stroke='#777' stroke-width='1' stroke-dasharray='1.5 1'/><rect x='106' y='11.8' width='14.5' height='1' fill='#777'/><rect x='107' y='5' width='4.3' height='15' fill='#8E8E8E'/><rect x='115' y='8.3' width='4.4' height='8.4' fill='#8E8E8E'/></svg>
<svg style="left:790px;top:116px" width="20" height="12" viewBox="0 0 20 12"><path d='M1.5 6 L6 1.5 V4 H13 V1.5 L17.5 6 L13 10.5 V8 H6 V10.5 Z' fill='#8E8E8E' stroke='#7A7A7A' stroke-width='0.8' stroke-linejoin='round'/></svg>
<svg style="left:816px;top:114px" width="12" height="17" viewBox="0 0 12 17"><path d='M6 0.8 L10.5 5.3 H8 V11.7 H10.5 L6 16.2 L1.5 11.7 H4 V5.3 H1.5 Z' fill='#8E8E8E' stroke='#7A7A7A' stroke-width='0.8' stroke-linejoin='round'/></svg>
<svg style='left:0;top:0;position:absolute' width='0' height='0'><defs><linearGradient id='pgr' x1='0' y1='0' x2='0' y2='1'><stop offset='0' stop-color='#F6F6F6'/><stop offset='1' stop-color='#D6D8DC'/></linearGradient><linearGradient id='pbl' x1='0' y1='0' x2='0' y2='1'><stop offset='0' stop-color='#F2F6FA'/><stop offset='1' stop-color='#D4DCE6'/></linearGradient></defs></svg>
<svg style="left:899px;top:127px" width="18" height="17" viewBox="0 0 18 17"><rect x='1.5' y='1.5' width='15' height='14' fill='url(#pgr)' stroke='#5E6670' stroke-width='1'/></svg>
<svg style="left:899px;top:150px" width="18" height="17" viewBox="0 0 18 17"><rect x='1.5' y='4.5' width='15' height='11' fill='url(#pbl)' stroke='#5E6670' stroke-width='1'/><path d='M1.5 4.5 V2.5 H7 L7.5 4.5' fill='#B8CCE4' stroke='#5E6670' stroke-width='1'/><path d='M7.5 2.5 H15.5 L16.5 4.5' fill='#E4ECF4' stroke='#8A96A2' stroke-width='1'/></svg>
<svg style="left:899px;top:173px" width="18" height="17" viewBox="0 0 18 17"><rect x='1.5' y='2.5' width='5' height='13' fill='url(#pbl)' stroke='#8A96A2' stroke-width='1'/><rect x='10.5' y='2.5' width='6' height='13' fill='url(#pbl)' stroke='#8A96A2' stroke-width='1'/><rect x='7' y='2' width='3' height='14' fill='#C6D6EA'/><path d='M8.5 3 V15' stroke='#6A7E96' stroke-dasharray='1 1.5'/></svg>
<svg style="left:899px;top:196px" width="18" height="17" viewBox="0 0 18 17"><rect x='1.5' y='1.5' width='15' height='14' fill='url(#pbl)' stroke='#5E6670' stroke-width='1'/><rect x='12.5' y='1.5' width='4' height='14' fill='#E8ECF0' stroke='#5E6670' stroke-width='1'/><rect x='1.5' y='11.5' width='15' height='4' fill='#E8ECF0' stroke='#5E6670' stroke-width='1'/><rect x='13.5' y='6' width='2' height='3' fill='#4A5460'/><rect x='6' y='12.5' width='3' height='2' fill='#4A5460'/></svg>
<svg style="left:899px;top:219px" width="18" height="17" viewBox="0 0 18 17"><rect x='1.5' y='3.5' width='15' height='10' fill='url(#pgr)' stroke='#5E6670' stroke-width='1'/><rect x='7.5' y='5.5' width='6' height='5' fill='#F4F4F4' stroke='#8A9098' stroke-width='1'/><path d='M4.5 6 V11' stroke='#8A9098' stroke-dasharray='1 1.5'/></svg>
<svg style="left:899px;top:242px" width="18" height="17" viewBox="0 0 18 17"><rect x='3.5' y='1.5' width='8' height='7' fill='#F0F2F4' stroke='#8A96A2' stroke-width='1'/><rect x='6.5' y='5.5' width='10' height='8' fill='url(#pbl)' stroke='#5E6C80' stroke-width='1'/><rect x='6.5' y='5.5' width='10' height='2' fill='#A8BCD4'/><path d='M4 9 V14 Q4 15 5 15' fill='none' stroke='#8A96A2'/><ellipse cx='3.5' cy='15' rx='2.2' ry='1.2' fill='#E8ECF0' stroke='#6A7680' stroke-width='0.8'/></svg>
<svg style="left:899px;top:265px" width="18" height="17" viewBox="0 0 18 17"><rect x='1.5' y='1.5' width='15' height='14' fill='url(#pbl)' stroke='#5E6670' stroke-width='1'/><rect x='2' y='2' width='14' height='2.2' fill='#9EB6D2'/><path d='M3 3 H15' stroke='#E8F0F8' stroke-dasharray='1 1'/></svg>
<svg style="left:899px;top:288px" width="18" height="17" viewBox="0 0 18 17"><rect x='1.5' y='1.5' width='15' height='14' fill='url(#pbl)' stroke='#5E6670' stroke-width='1'/><rect x='4' y='4' width='7' height='6.5' fill='#8A7AC8' opacity='0.85'/><rect x='6.5' y='6.5' width='7' height='6.5' fill='#B0A6E8' opacity='0.8'/><rect x='6.5' y='6.5' width='4.5' height='4' fill='#3A2E88'/></svg>
<svg style="left:899px;top:328px" width="18" height="17" viewBox="0 0 18 17"><text x='0.5' y='12' font-size='8.5' font-family='Liberation Sans' fill='#505860' textLength='16' lengthAdjust='spacingAndGlyphs'>label</text></svg>
<svg style="left:899px;top:351px" width="18" height="17" viewBox="0 0 18 17"><rect x='1.5' y='3.5' width='15' height='10' fill='url(#pbl)' stroke='#6E7A88' stroke-width='1'/><text x='3.5' y='11.5' font-size='8' font-family='Liberation Sans' fill='#5A6878' textLength='11' lengthAdjust='spacingAndGlyphs'>OK</text></svg>
<svg style="left:899px;top:374px" width="18" height="17" viewBox="0 0 18 17"><rect x='1.5' y='3.5' width='15' height='10' fill='url(#pbl)' stroke='#6E7A88' stroke-width='1'/><text x='3' y='11.5' font-size='8' font-family='Liberation Sans' fill='#5A6878' textLength='12' lengthAdjust='spacingAndGlyphs'>ON</text></svg>
<svg style="left:899px;top:397px" width="18" height="17" viewBox="0 0 18 17"><rect x='2.5' y='5.5' width='6' height='6' fill='#F0F2F4' stroke='#6E7A88' stroke-width='1'/><path d='M4 9.5 L6.5 7' stroke='#2A3440' stroke-width='1.2'/><rect x='9.5' y='8' width='6' height='1' fill='#707880'/></svg>
<svg style="left:899px;top:420px" width="18" height="17" viewBox="0 0 18 17"><circle cx='5.5' cy='8.5' r='3.2' fill='#F4F4F4' stroke='#6E7680' stroke-width='1'/><circle cx='5.5' cy='8.5' r='1.4' fill='#222'/><rect x='9.5' y='8' width='6' height='1' fill='#707880'/></svg>
<svg style="left:899px;top:443px" width="18" height="17" viewBox="0 0 18 17"><circle cx='5.5' cy='5' r='3' fill='#F4F4F4' stroke='#6E7680' stroke-width='1'/><circle cx='5.5' cy='5' r='1.3' fill='#222'/><circle cx='5.5' cy='12.5' r='3' fill='#E0E0E0' stroke='#8A9098' stroke-width='1'/><rect x='9.5' y='4.5' width='6' height='1' fill='#707880'/><rect x='9.5' y='12' width='6' height='1' fill='#707880'/></svg>
<svg style="left:899px;top:466px" width="18" height="17" viewBox="0 0 18 17"><rect x='1.5' y='3.5' width='15' height='10' fill='#F2F4F6' stroke='#6E7A88' stroke-width='1'/><rect x='6.5' y='4' width='9.5' height='9' fill='#D8E0EA'/><rect x='6.5' y='4' width='1' height='9' fill='#6E7A88'/><path d='M9 7 H14 L11.5 10 Z' fill='#2A3440'/></svg>
<svg style="left:899px;top:489px" width="18" height="17" viewBox="0 0 18 17"><rect x='1.5' y='2.5' width='15' height='13' fill='#F2F4F6' stroke='#6E7A88' stroke-width='1'/><rect x='3.5' y='5' width='8' height='1.2' fill='#5A6878'/><rect x='3' y='7.5' width='9' height='2.5' fill='#8AA4C4'/><rect x='3.5' y='11.5' width='8' height='1.2' fill='#5A6878'/><rect x='13' y='3' width='3' height='12' fill='#DCE2EA'/></svg>
<svg style="left:899px;top:512px" width="18" height="17" viewBox="0 0 18 17"><rect x='1.5' y='4.5' width='15' height='9' fill='url(#pbl)' stroke='#6E7A88' stroke-width='1'/></svg>
<svg style="left:899px;top:535px" width="18" height="17" viewBox="0 0 18 17"><rect x='1.5' y='1.5' width='15' height='14' fill='#F4F6F8' stroke='#6E7A88' stroke-width='1'/><text x='3' y='10' font-size='8.5' font-family='Liberation Sans' fill='#6A7480' textLength='11' lengthAdjust='spacingAndGlyphs'>tx</text></svg>
<svg style="left:902px;top:113px" width="9" height="9" viewBox="0 0 9 9"><rect x='0.5' y='0.5' width='8' height='8' rx='1' fill='#fff' stroke='#9A968A' stroke-width='1'/><rect x='2' y='4' width='5' height='1.3' fill='#000'/></svg>
<svg style="left:902px;top:313px" width="9" height="9" viewBox="0 0 9 9"><rect x='0.5' y='0.5' width='8' height='8' rx='1' fill='#fff' stroke='#9A968A' stroke-width='1'/><rect x='2' y='4' width='5' height='1.3' fill='#000'/></svg>
<svg style="left:1101px;top:109px" width="13" height="14" viewBox="0 0 13 14"><defs><linearGradient id='sb' x1='0' y1='0' x2='1' y2='0'><stop offset='0' stop-color='#F4F2EE'/><stop offset='1' stop-color='#DEDAD2'/></linearGradient></defs><rect x='0' y='0' width='13' height='14' fill='url(#sb)'/><rect x='12' y='0' width='1' height='14' fill='#C8C4BC'/><rect x='0' y='13' width='13' height='1' fill='#C8C4BC'/><path d='M4 8.2 L6.5 5.7 L9 8.2' fill='none' stroke='#333' stroke-width='1.5'/></svg>
<svg style="left:1101px;top:537px" width="13" height="14" viewBox="0 0 13 14"><defs><linearGradient id='sb' x1='0' y1='0' x2='1' y2='0'><stop offset='0' stop-color='#F4F2EE'/><stop offset='1' stop-color='#DEDAD2'/></linearGradient></defs><rect x='0' y='0' width='13' height='14' fill='url(#sb)'/><rect x='12' y='0' width='1' height='14' fill='#C8C4BC'/><rect x='0' y='13' width='13' height='1' fill='#C8C4BC'/><path d='M4 5.8 L6.5 8.3 L9 5.8' fill='none' stroke='#333' stroke-width='1.5'/></svg>
<div style="left:1101px;top:123px;width:13px;height:150px;background:linear-gradient(90deg,#F4F2EE,#E2DED6);border-bottom:1px solid #C8C4BC;border-right:1px solid #C8C4BC;box-sizing:border-box"></div>
<svg style="left:1103px;top:194px" width="9" height="8" viewBox="0 0 9 8"><path d='M1 1.5 H8 M1 3.5 H8 M1 5.5 H8' stroke='#9A968E' stroke-width='1'/></svg>
<svg style="left:908px;top:28px" width="22" height="17" viewBox="0 0 22 17"><defs><radialGradient id='mg' cx='0.4' cy='0.35' r='0.7'><stop offset='0' stop-color='#F0F6FC'/><stop offset='1' stop-color='#B8D0EA'/></radialGradient></defs><circle cx='7' cy='6.2' r='4.6' fill='url(#mg)' stroke='#1E2228' stroke-width='1.3'/><path d='M10.4 9.6 L14.2 13.6' stroke='#101418' stroke-width='2.4' stroke-linecap='round'/><path d='M15 6.2 H20 L17.5 9 Z' fill='#000'/></svg>
<svg style="left:361px;top:579px" width="17" height="16" viewBox="0 0 17 16"><defs><linearGradient id='daa' x1='0' y1='0' x2='0' y2='1'><stop offset='0' stop-color='#D8F8B8'/><stop offset='1' stop-color='#6CC24A'/></linearGradient></defs><path d='M1.5 1 L8.5 7.5 L1.5 14.5 Z' fill='url(#daa)' stroke='#1A8A1A' stroke-width='1.1' stroke-linejoin='round'/><path d='M7.5 1 L14.5 7.5 L7.5 14.5 Z' fill='url(#daa)' stroke='#1A8A1A' stroke-width='1.1' stroke-linejoin='round'/></svg>
<svg style="left:361px;top:602px" width="17" height="16" viewBox="0 0 17 16"><defs><linearGradient id='dab' x1='0' y1='0' x2='0' y2='1'><stop offset='0' stop-color='#F0F0B0'/><stop offset='1' stop-color='#B8B850'/></linearGradient></defs><path d='M1.5 1 L8.5 7.5 L1.5 14.5 Z' fill='url(#dab)' stroke='#7A7A20' stroke-width='1.1' stroke-linejoin='round'/><path d='M7.5 1 L14.5 7.5 L7.5 14.5 Z' fill='url(#dab)' stroke='#7A7A20' stroke-width='1.1' stroke-linejoin='round'/></svg>
<svg style="left:364px;top:626px" width="11" height="7" viewBox="0 0 11 7"><path d='M1 1 L4 3.5 L1 6 M6 1 L9 3.5 L6 6' fill='none' stroke='#333' stroke-width='1.1'/></svg>
<div style="left:1101px;top:576px;width:13px;height:68px;background:#FAF8F8"></div>
<svg style="left:1101px;top:576px" width="13" height="14" viewBox="0 0 13 14"><defs><linearGradient id='sb' x1='0' y1='0' x2='1' y2='0'><stop offset='0' stop-color='#F4F2EE'/><stop offset='1' stop-color='#DEDAD2'/></linearGradient></defs><rect x='0' y='0' width='13' height='14' fill='url(#sb)'/><rect x='12' y='0' width='1' height='14' fill='#C8C4BC'/><rect x='0' y='13' width='13' height='1' fill='#C8C4BC'/><path d='M4 8.2 L6.5 5.7 L9 8.2' fill='none' stroke='#333' stroke-width='1.5'/></svg>
<svg style="left:1101px;top:630px" width="13" height="14" viewBox="0 0 13 14"><defs><linearGradient id='sb' x1='0' y1='0' x2='1' y2='0'><stop offset='0' stop-color='#F4F2EE'/><stop offset='1' stop-color='#DEDAD2'/></linearGradient></defs><rect x='0' y='0' width='13' height='14' fill='url(#sb)'/><rect x='12' y='0' width='1' height='14' fill='#C8C4BC'/><rect x='0' y='13' width='13' height='1' fill='#C8C4BC'/><path d='M4 5.8 L6.5 8.3 L9 5.8' fill='none' stroke='#333' stroke-width='1.5'/></svg>
<svg style="left:331px;top:588px" width="18" height="18" viewBox="0 0 18 18"><circle cx='8.6' cy='8.5' r='7.6' fill='#9A9A9A'/><path d='M6.4 6.6 Q6.4 4.3 8.7 4.3 Q11 4.3 11 6.4 Q11 7.8 9.6 8.5 Q8.7 9 8.7 10.3' fill='none' stroke='#B4B4B4' stroke-width='1.8'/><rect x='7.8' y='11.5' width='1.9' height='1.9' fill='#B4B4B4'/></svg>
<div style="left:1032px;top:655px;width:1px;height:14px;background:#B8B4A8"></div>
<div style="left:1033px;top:655px;width:1px;height:14px;background:#fff"></div>
<div style="left:1092px;top:655px;width:1px;height:14px;background:#B8B4A8"></div>
<div style="left:1093px;top:655px;width:1px;height:14px;background:#fff"></div>
</body></html>
